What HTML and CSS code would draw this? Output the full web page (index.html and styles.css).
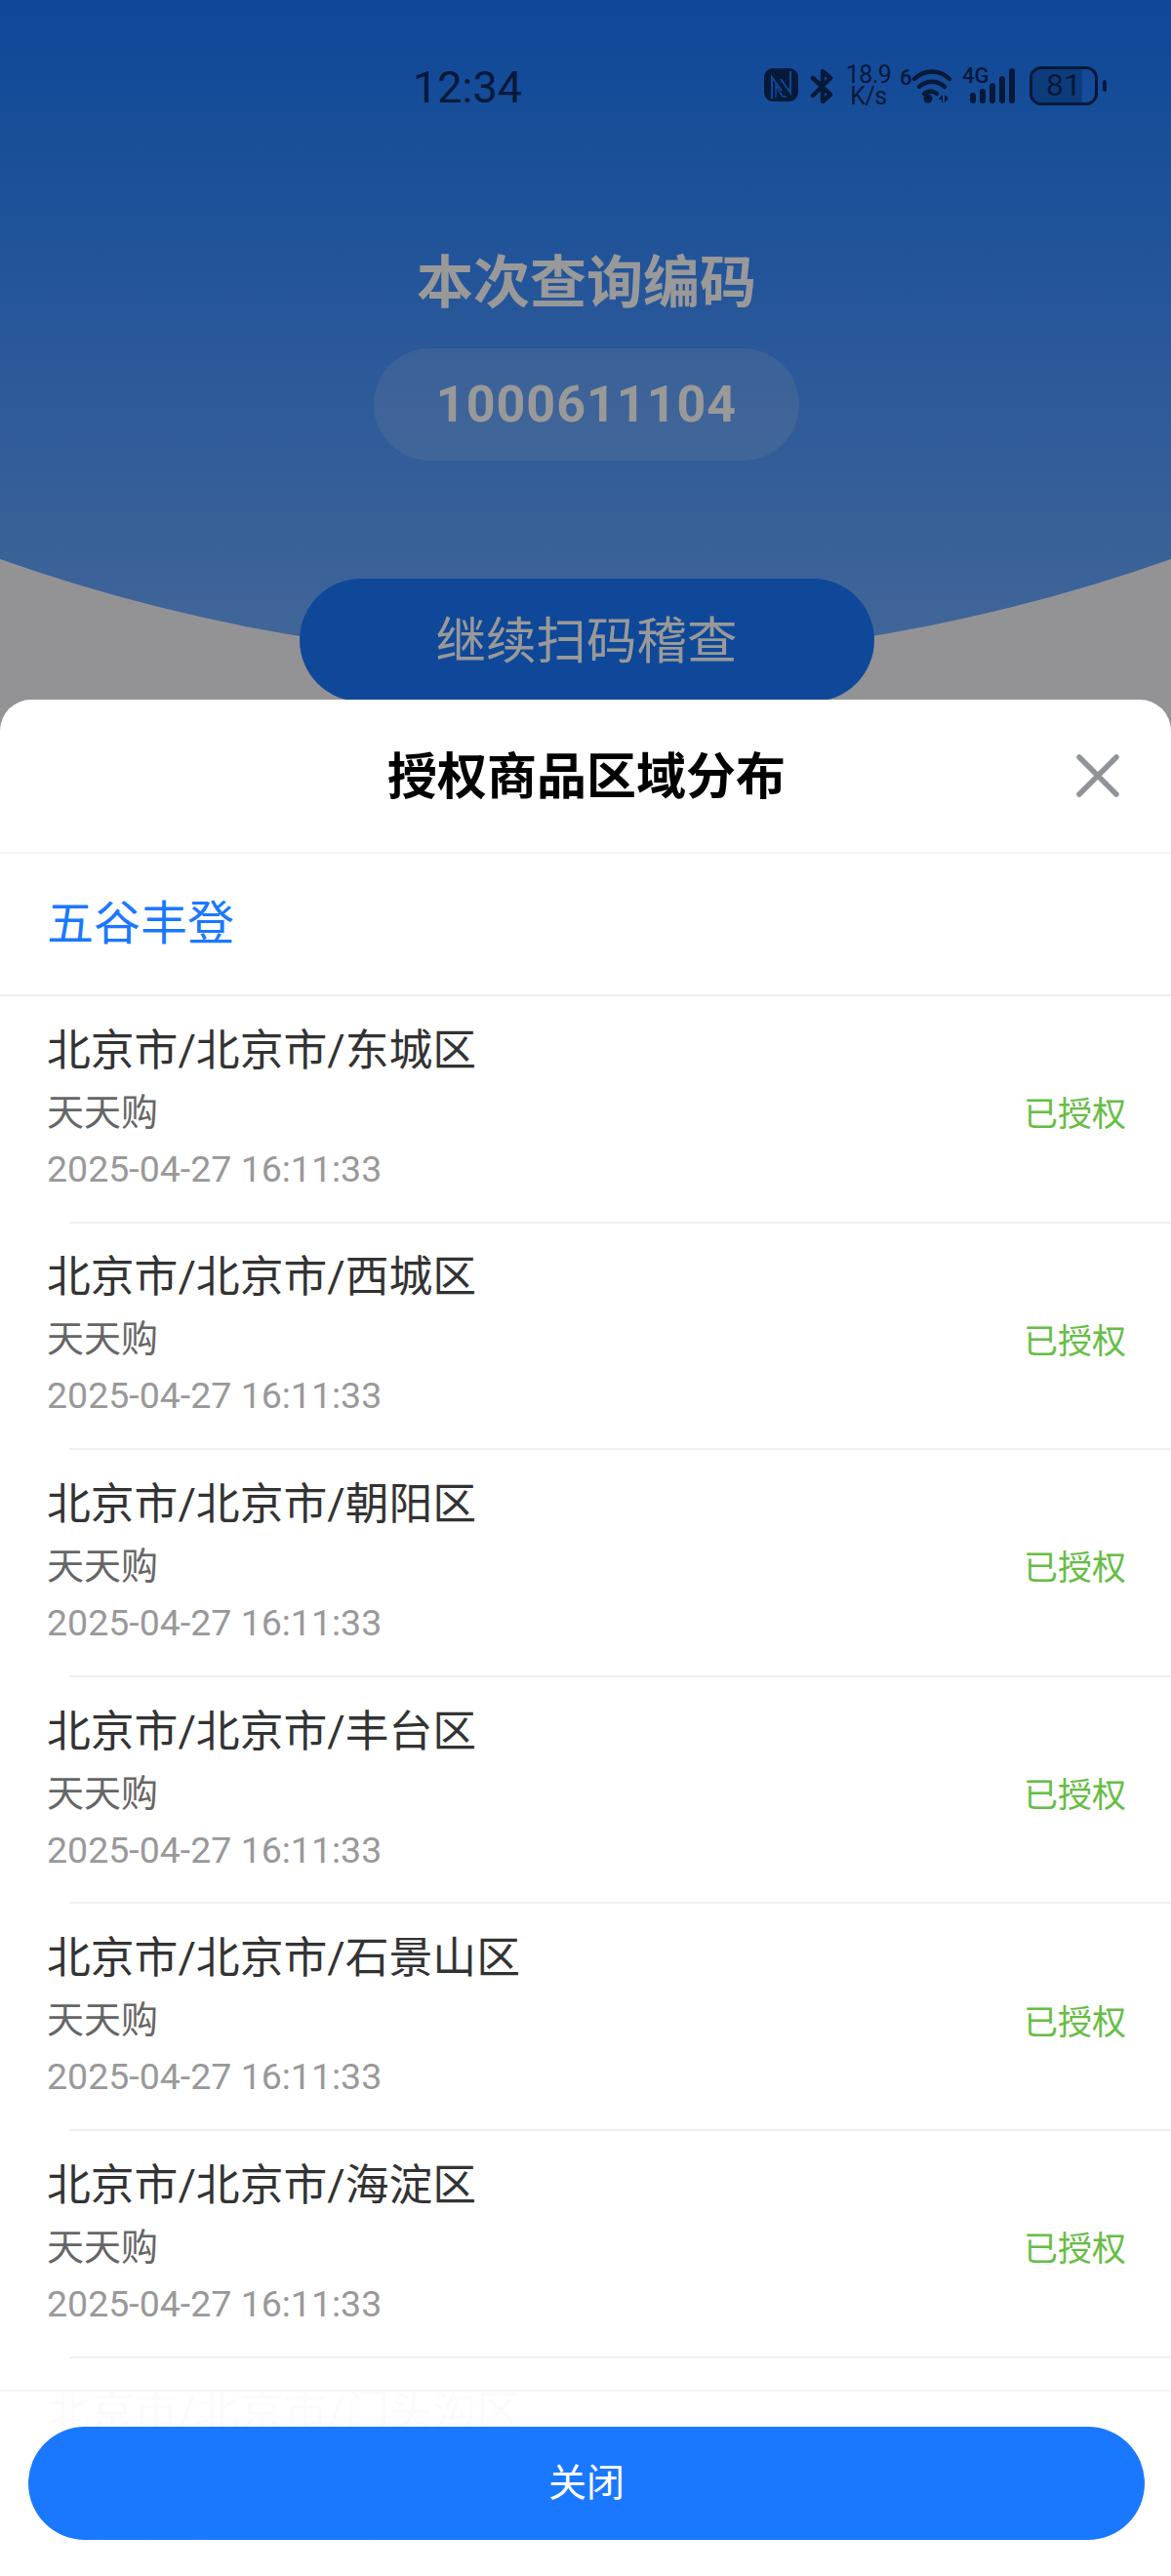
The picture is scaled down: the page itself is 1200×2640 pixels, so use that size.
FILE: index.html
```html
<!DOCTYPE html>
<html lang="zh-CN">
<head>
<meta charset="utf-8">
<title>授权商品区域分布</title>
<link rel="stylesheet" href="styles.css">
</head>
<body>
<div class="page">
  <div class="status">
    <span class="time">12:34</span>
    <div class="status-icons">
      <svg class="ic-nfc" viewBox="0 0 35 34" width="35" height="34"><rect x="0" y="0" width="35" height="34" rx="9" fill="#0a2a60"/><path d="M8 31V9l10 14M27 3v22L17 11" fill="none" stroke="#1878ff" stroke-width="2"/><path d="M12 30V18l7 11h4" fill="none" stroke="#1878ff" stroke-width="1.500"/></svg>
      <svg class="ic-bt" viewBox="0 0 24 36" width="24" height="36"><path d="M3 10l18 17-8 7V3l8 7L3 28" fill="none" stroke="#0a2a60" stroke-width="4.500" stroke-linejoin="round" stroke-linecap="round"/></svg>
      <div class="speed"><span>18.9</span><span>K/s</span></div>
      <span class="wifi-six">6</span>
      <svg class="ic-wifi" viewBox="0 0 42 38" width="42" height="38"><path d="M3 13C13 3 29 3 39 13M8 21c7-7 19-7 26 0M13 28c4-3 9-3 13 0" fill="none" stroke="#0a2a60" stroke-width="4.500" stroke-linecap="round"/><circle cx="17" cy="33" r="4.500" fill="#0a2a60"/><path d="M32 29v8h-1v-3h-4zM34 29v8l4-4z" fill="#0a2a60"/></svg>
      <div class="net">
        <span class="net-label">4G</span>
        <svg viewBox="0 0 48 36" width="48" height="36"><path d="M5 28v5M15 24v9M25 18v15M35 11v22M45 3v30" fill="none" stroke="#0a2a60" stroke-width="6" stroke-linecap="round"/></svg>
      </div>
      <div class="battery"><span class="battery-fill"></span><span class="battery-num">81</span></div>
      <span class="battery-tip"></span>
    </div>
  </div>
  <div class="hero">
    <h1 class="hero-title">本次查询编码</h1>
    <div class="code-pill">1000611104</div>
    <button class="scan-btn">继续扫码稽查</button>
  </div>
</div>
<div class="mask"></div>
<section class="sheet">
  <header class="sheet-head">
    <h2 class="sheet-title">授权商品区域分布</h2>
    <svg class="sheet-close" viewBox="0 0 44 44" width="44" height="44"><path d="M3 3l38 38M41 3L3 41" stroke="#909399" stroke-width="5.500" stroke-linecap="round" fill="none"/></svg>
  </header>
  <div class="brand">五谷丰登</div>
  <div class="list">
    <div class="row"><div class="row-main"><div class="row-title">北京市/北京市/东城区</div><div class="row-sub">天天购</div><div class="row-date">2025-04-27 16:11:33</div></div><span class="row-state">已授权</span></div>
    <div class="row"><div class="row-main"><div class="row-title">北京市/北京市/西城区</div><div class="row-sub">天天购</div><div class="row-date">2025-04-27 16:11:33</div></div><span class="row-state">已授权</span></div>
    <div class="row"><div class="row-main"><div class="row-title">北京市/北京市/朝阳区</div><div class="row-sub">天天购</div><div class="row-date">2025-04-27 16:11:33</div></div><span class="row-state">已授权</span></div>
    <div class="row"><div class="row-main"><div class="row-title">北京市/北京市/丰台区</div><div class="row-sub">天天购</div><div class="row-date">2025-04-27 16:11:33</div></div><span class="row-state">已授权</span></div>
    <div class="row"><div class="row-main"><div class="row-title">北京市/北京市/石景山区</div><div class="row-sub">天天购</div><div class="row-date">2025-04-27 16:11:33</div></div><span class="row-state">已授权</span></div>
    <div class="row"><div class="row-main"><div class="row-title">北京市/北京市/海淀区</div><div class="row-sub">天天购</div><div class="row-date">2025-04-27 16:11:33</div></div><span class="row-state">已授权</span></div>
    <div class="row"><div class="row-main"><div class="row-title">北京市/北京市/门头沟区</div><div class="row-sub">天天购</div><div class="row-date">2025-04-27 16:11:33</div></div><span class="row-state">已授权</span></div>
  </div>
  <footer class="sheet-foot"><button class="close-btn">关闭</button></footer>
</section>
</body>
</html>
```

FILE: styles.css
```css
* { box-sizing: border-box; }
html, body { margin: 0; padding: 0; }
body {
  position: relative;
  width: 1200px;
  height: 2640px;
  overflow: hidden;
  background: #f5f5f9;
  font-family: Roboto, "Noto Sans CJK SC", sans-serif;
}
.page { position: relative; height: 100%; }
.page::before {
  content: "";
  position: absolute;
  left: 0;
  top: 0;
  width: 1200px;
  height: 676px;
  background: linear-gradient(180deg, #1878ff 0%, #6fabff 100%);
  clip-path: circle(1800px at 600px -1124px);
}
.status {
  position: relative;
  display: flex;
  justify-content: space-between;
  height: 140px;
  padding: 66px 66px 0 423px;
  color: #0a2a60;
}
.time { font-size: 45px; line-height: 48px; font-weight: 400; }
.status-icons {
  display: flex;
  align-items: flex-start;
  padding-top: 4px;
}
.ic-nfc, .ic-bt, .ic-wifi { flex: none; display: block; }
.ic-bt { margin-left: 12px; }
.speed {
  display: flex;
  flex-direction: column;
  align-items: center;
  flex: none;
  width: 46px;
  margin: -4px 0 0 13px;
  font-size: 25px;
  line-height: 22px;
  letter-spacing: -0.5px;
}
.wifi-six { margin-left: 9px; width: 10px; font-size: 22px; line-height: 20px; font-weight: 500; }
.ic-wifi { margin: -2px 0 0 2px; }
.net { position: relative; flex: none; width: 54px; height: 36px; margin-left: 10px; }
.net svg { display: block; margin-left: 6px; }
.net-label {
  position: absolute;
  left: 0;
  top: -3px;
  font-size: 22px;
  line-height: 22px;
  font-weight: 500;
}
.battery {
  position: relative;
  flex: none;
  width: 70px;
  height: 40px;
  margin: -2px 0 0 15px;
  border: 3.500px solid #0a2a60;
  border-radius: 12px;
  overflow: hidden;
  text-align: center;
}
.battery-fill {
  position: absolute;
  left: 0;
  top: 0;
  bottom: 0;
  width: 80%;
  background: #1664d0;
}
.battery-num {
  position: relative;
  display: block;
  font-size: 32px;
  line-height: 33px;
}
.battery-tip {
  flex: none;
  width: 4px;
  height: 12px;
  margin: 12px 0 0 5px;
  border-radius: 2px;
  background: #0a2a60;
}
.hero {
  position: relative;
  display: flex;
  flex-direction: column;
  align-items: center;
  padding: 108px 0 0 2px;
}
.hero-title {
  margin: 0;
  color: #fff;
  font-size: 58px;
  line-height: 84px;
  font-weight: 700;
}
.code-pill {
  width: 436px;
  height: 115px;
  margin-top: 25px;
  border-radius: 58px;
  background: rgba(255, 255, 255, 0.15);
  color: #fff;
  font-size: 52px;
  line-height: 115px;
  font-weight: 700;
  text-align: center;
  letter-spacing: 1px;
}
.scan-btn {
  width: 589px;
  height: 126px;
  margin-top: 121px;
  padding: 0 0 8px;
  border: 0;
  border-radius: 63px;
  background: #1a78ff;
  color: #fff;
  font: 400 51.500px "Noto Sans CJK SC", sans-serif;
}
.mask {
  position: absolute;
  inset: 0;
  background: rgba(0, 0, 0, 0.4);
}
.sheet {
  position: absolute;
  left: 0;
  right: 0;
  bottom: 0;
  height: 1923px;
  display: flex;
  flex-direction: column;
  border-radius: 32px 32px 0 0;
  background: #fff;
  overflow: hidden;
}
.sheet-head {
  position: relative;
  flex: none;
  height: 158px;
  padding-left: 2px;
  border-bottom: 2px solid #f3f3f3;
}
.sheet-title {
  margin: 0;
  color: #000;
  font: 700 51px/150px "Noto Sans CJK SC", sans-serif;
  text-align: center;
}
.sheet-close { position: absolute; left: 1103px; top: 56px; }
.brand {
  flex: none;
  height: 146px;
  padding-left: 48px;
  border-bottom: 2px solid #eef0f1;
  color: #1a78ff;
  font: 400 48px/134px "Noto Sans CJK SC", sans-serif;
}
.list { flex: 1; overflow: hidden; }
.row {
  position: relative;
  display: flex;
  align-items: center;
  height: 232.6px;
  padding: 12px 46px 0 48px;
}
.row::after {
  content: "";
  position: absolute;
  left: 71px;
  right: 0;
  bottom: 0;
  height: 2px;
  background: #eef0f1;
}
.row-main { flex: 1; padding: 0 0 18px; }
.row-title {
  color: #333;
  font-size: 44.800px;
  line-height: 63px;
}
.row-sub {
  color: #666;
  font-size: 38px;
  line-height: 64px;
}
.row-date {
  color: #999;
  font-size: 37.500px;
  line-height: 52px;
}
.row-state { color: #67bd45; font-size: 35px; line-height: 50px; }
.sheet-foot {
  position: absolute;
  left: 0;
  right: 0;
  bottom: 0;
  height: 191px;
  padding: 36px 27px 0 29px;
  border-top: 2px solid #f5f5f5;
  background: rgba(255, 255, 255, 0.98);
}
.close-btn {
  display: block;
  width: 100%;
  height: 116px;
  padding: 0 0 8px;
  border: 0;
  border-radius: 58px;
  background: #1a78ff;
  color: #fff;
  font: 400 39px "Noto Sans CJK SC", sans-serif;
}
```
